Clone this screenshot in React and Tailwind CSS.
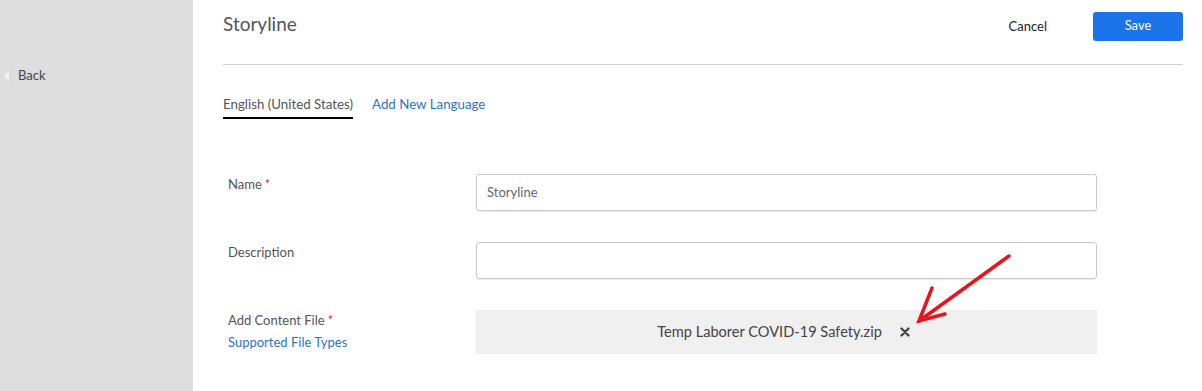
import React from 'react';

const Label = ({ children, required }) => (
  <span className="text-[13px] leading-[16px] text-[#555]">
    {children}
    {required && <span className="ml-[3px] text-[#d9302c]">*</span>}
  </span>
);

export default function App() {
  return (
    <div className="relative flex h-[391px] w-[1202px] overflow-hidden bg-white font-['Lato',sans-serif]">
      <aside className="w-[193px] shrink-0 bg-[#dedede]">
        <div className="mt-[66px] flex items-center pl-[4px]">
          <span className="h-0 w-0 border-y-[5px] border-r-[5px] border-y-transparent border-r-[#f2f2f2]" />
          <span className="ml-[9px] text-[13px] text-[#444]">Back</span>
        </div>
      </aside>

      <main className="flex-1 pl-[30px] pr-[19px]">
        <div className="flex h-[65px] items-center justify-between border-b border-[#cfcfcf] pb-[12px]">
          <h1 className="mb-[4px] text-[19px] text-[#555]">Storyline</h1>
          <div className="flex items-center">
            <button className="mr-[46px] mt-[1px] text-[13px] text-[#222]">Cancel</button>
            <button className="h-[29px] w-[90px] rounded-[3px] bg-[#1a73e8] text-[13px] text-white">Save</button>
          </div>
        </div>

        <div className="mt-[30px] flex items-start gap-[19px] text-[13.3px]">
          <span className="border-b-2 border-black pb-[2px] text-[#555]">English (United States)</span>
          <span className="text-[#2f72c9]">Add New Language</span>
        </div>

        <div className="mt-[55px] flex flex-col gap-[31px] pl-[5px] pr-[86px]">
          <div className="flex items-start">
            <div className="-mt-[3px] w-[248px]"><Label required>Name</Label></div>
            <div className="flex h-[37px] flex-1 items-center rounded-[3px] border border-[#c8c8c8] pl-[10px] text-[13px] text-[#666] shadow-[0_1px_1px_rgba(0,0,0,0.08)]">
              Storyline
            </div>
          </div>
          <div className="flex items-start">
            <div className="-mt-[3px] w-[248px]"><Label>Description</Label></div>
            <div className="h-[37px] flex-1 rounded-[3px] border border-[#c8c8c8] shadow-[0_1px_1px_rgba(0,0,0,0.08)]" />
          </div>
          <div className="flex items-start">
            <div className="mt-[2px] flex w-[248px] flex-col gap-[6px]">
              <Label required>Add Content File</Label>
              <span className="text-[13px] leading-[16px] text-[#2f72c9]">Supported File Types</span>
            </div>
            <div className="flex h-[44px] flex-1 items-center justify-center gap-[18px] bg-[#f0f0f0] pr-[6px]">
              <span className="text-[14.6px] text-[#444]">Temp Laborer COVID-19 Safety.zip</span>
              <svg width="10" height="10" viewBox="0 0 10 10">
                <path d="M1.5 1.5 L8.5 8.5 M8.5 1.5 L1.5 8.5" stroke="#444" strokeWidth="2.4" strokeLinecap="round" />
              </svg>
            </div>
          </div>
        </div>
      </main>

      <svg className="pointer-events-none absolute left-0 top-0" width="1202" height="391">
        <g stroke="#e8141c" strokeWidth="3.5" strokeLinecap="round" fill="none">
          <path d="M1009 256 L919 321" />
          <path d="M932 288 L919 321 L945 314" />
        </g>
      </svg>
    </div>
  );
}
